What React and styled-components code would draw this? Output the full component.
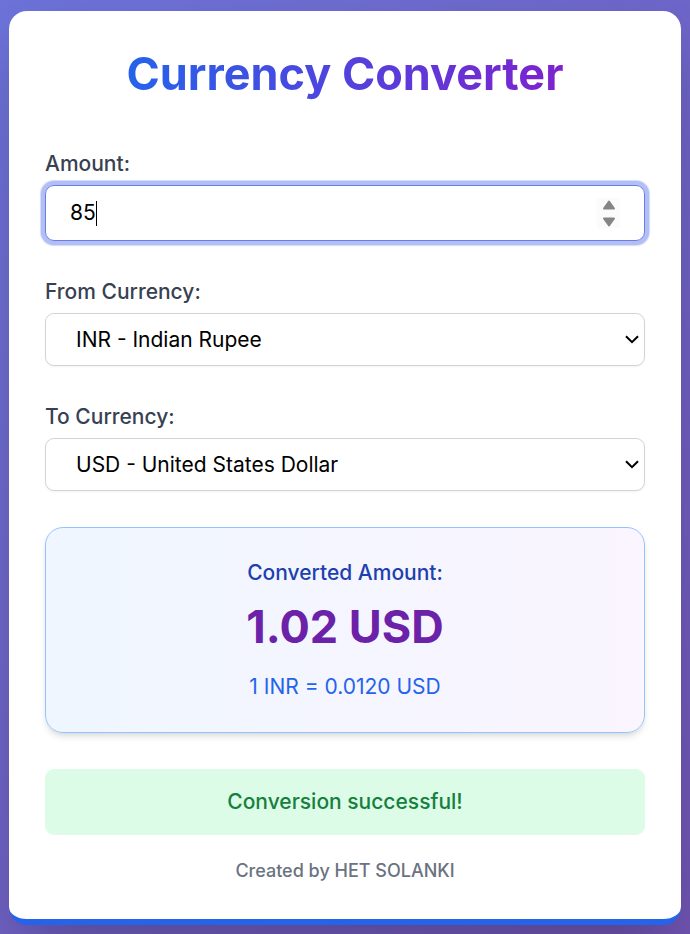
import React, { useState } from "react";
import styled, { createGlobalStyle } from "styled-components";

const Global = createGlobalStyle`
  *, *::before, *::after { box-sizing: border-box; }
  body { margin: 0; font-family: Inter, "Liberation Sans", sans-serif; }
`;

const Page = styled.main`
  min-height: 100vh;
  padding: 11px 9px 9px;
  background: linear-gradient(135deg, #6c72d8 0%, #6f53b0 100%);
`;

const Card = styled.section`
  padding: 36px 36px 32px;
  background: #ffffff;
  border-bottom: 6px solid #2563eb;
  border-radius: 18px;
  box-shadow: 0 28px 56px -14px rgba(0, 0, 0, 0.25);
`;

const Title = styled.h1`
  width: fit-content;
  margin: 0 auto 48px;
  font-size: 45px;
  line-height: 54px;
  font-weight: 700;
  color: transparent;
  background: linear-gradient(to right, #2563eb, #7e22ce);
  background-clip: text;
`;

const Field = styled.div`
  margin-bottom: 36px;
`;

const Label = styled.label`
  display: block;
  margin-bottom: 6px;
  font-size: 21px;
  line-height: 30px;
  font-weight: 500;
  color: #374151;
`;

const AmountBox = styled.div`
  display: flex;
  align-items: center;
  height: 56px;
  padding: 0 24px;
  border: 1px solid #667eea;
  border-radius: 9px;
  box-shadow: 0 0 0 4px #b2bef4, 0 0 1px 5px #d4dafa;
`;

const AmountEntry = styled.div`
  display: grid;
  flex: 1;
  align-items: center;
  font-size: 21px;
  line-height: 32px;

  > * { grid-area: 1 / 1; }
`;

const AmountInput = styled.input`
  width: 100%;
  min-width: 0;
  padding: 0;
  border: 0;
  outline: 0;
  background: transparent;
  font: inherit;
  color: #000000;
  caret-color: transparent;
  appearance: textfield;

  &::-webkit-inner-spin-button { appearance: none; margin: 0; }
  &:focus + span { border-color: #000000; }
`;

const Caret = styled.span`
  justify-self: start;
  height: 25px;
  border-right: 1px solid transparent;
  color: transparent;
  line-height: 25px;
  pointer-events: none;
  user-select: none;
`;

const Stepper = styled.div`
  display: flex;
  flex-direction: column;
  background: #fbfbfb;
`;

const StepButton = styled.button`
  display: flex;
  justify-content: center;
  width: 23px;
  height: 15px;
  padding: 0;
  border: 0;
  background: transparent;
`;

const SelectBox = styled.div`
  display: grid;
  align-items: center;

  > * { grid-area: 1 / 1; }
  > svg { justify-self: end; margin-right: 6px; pointer-events: none; }
`;

const Select = styled.select`
  width: 100%;
  height: 53px;
  padding: 0 30px;
  border: 1px solid #d1d5db;
  border-radius: 9px;
  appearance: none;
  background: #ffffff;
  box-shadow: 0 1px 2px rgba(0, 0, 0, 0.05);
  font: 400 21px/32px Inter, "Liberation Sans", sans-serif;
  color: #000000;
`;

const Result = styled.section`
  display: flex;
  flex-direction: column;
  align-items: center;
  padding: 29px;
  border: 1px solid #93c5fd;
  border-radius: 18px;
  background: linear-gradient(to right, #eff6ff, #faf5ff);
  box-shadow: 0 5px 7px -1px rgba(0, 0, 0, 0.1), 0 2px 5px -2px rgba(0, 0, 0, 0.1);
`;

const ResultLabel = styled.p`
  margin: 0 0 10px;
  font-size: 21px;
  line-height: 32px;
  font-weight: 500;
  color: #1e40af;
`;

const ResultValue = styled.p`
  margin: 0;
  font-size: 45px;
  line-height: 56px;
  font-weight: 700;
  color: #6b21a8;
`;

const Rate = styled.p`
  margin: 16px 0 0;
  font-size: 21px;
  line-height: 32px;
  color: #2563eb;
`;

const Status = styled.p`
  margin: 36px 0 20px;
  padding: 17px;
  border-radius: 9px;
  background: #dcfce7;
  font-size: 21px;
  line-height: 32px;
  font-weight: 500;
  text-align: center;
  color: #15803d;
`;

const Credit = styled.footer`
  font-size: 18px;
  line-height: 32px;
  font-weight: 500;
  text-align: center;
  color: #6b7280;
`;

function CurrencyField({ id, label, value, onChange }) {
  return (
    <Field>
      <Label htmlFor={id}>{label}</Label>
      <SelectBox>
        <Select id={id} value={value} onChange={(e) => onChange(e.target.value)}>
          <option value="INR">INR - Indian Rupee</option>
          <option value="USD">USD - United States Dollar</option>
        </Select>
        <svg width="14" height="9" viewBox="0 0 14 9" fill="none" aria-hidden="true">
          <path d="M1 1.2 7 7.2 13 1.2" stroke="#000000" strokeWidth="2" />
        </svg>
      </SelectBox>
    </Field>
  );
}

export default function App() {
  const [amount, setAmount] = useState("85");
  const [from, setFrom] = useState("INR");
  const [to, setTo] = useState("USD");
  const step = (by) => setAmount(String(Number(amount) + by));
  const rates = { INR: 1, USD: 0.012 };
  const rate = rates[to] / rates[from];

  return (
    <>
      <Global />
      <Page>
        <Card>
          <Title>Currency Converter</Title>
          <Field>
            <Label htmlFor="amount">Amount:</Label>
            <AmountBox>
              <AmountEntry>
                <AmountInput id="amount" type="number" autoFocus value={amount} onChange={(e) => setAmount(e.target.value)} />
                <Caret aria-hidden="true">{amount}</Caret>
              </AmountEntry>
              <Stepper>
                <StepButton type="button" aria-label="Increase" onClick={() => step(1)}>
                  <svg width="14" height="15" viewBox="0 0 14 15">
                    <path d="M7 3.5 12 10.5H2Z" fill="#858585" stroke="#858585" strokeWidth="2" strokeLinejoin="round" />
                  </svg>
                </StepButton>
                <StepButton type="button" aria-label="Decrease" onClick={() => step(-1)}>
                  <svg width="14" height="15" viewBox="0 0 14 15">
                    <path d="M7 12.5 12 5.5H2Z" fill="#858585" stroke="#858585" strokeWidth="2" strokeLinejoin="round" />
                  </svg>
                </StepButton>
              </Stepper>
            </AmountBox>
          </Field>
          <CurrencyField id="from" label="From Currency:" value={from} onChange={setFrom} />
          <CurrencyField id="to" label="To Currency:" value={to} onChange={setTo} />
          <Result>
            <ResultLabel>Converted Amount:</ResultLabel>
            <ResultValue>{(Number(amount) * rate).toFixed(2)} {to}</ResultValue>
            <Rate>1 {from} = {rate.toFixed(4)} {to}</Rate>
          </Result>
          <Status role="status">Conversion successful!</Status>
          <Credit>Created by HET SOLANKI</Credit>
        </Card>
      </Page>
    </>
  );
}
